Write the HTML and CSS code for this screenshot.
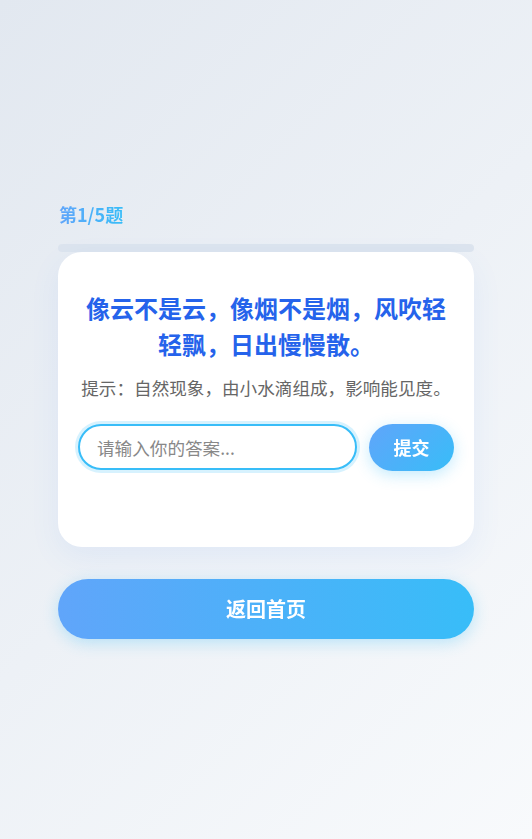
FILE: index.html
```html
<!DOCTYPE html>
<html lang="zh-CN">
<head>
<meta charset="utf-8">
<title>猜谜</title>
<link rel="stylesheet" href="styles.css">
</head>
<body>
<main class="quiz">
  <div class="quiz-label">第1/5题</div>
  <div class="progress"><div class="progress-fill"></div></div>
  <section class="card">
    <h2 class="question">像云不是云，像烟不是烟，风吹轻轻飘，日出慢慢散。</h2>
    <p class="hint">提示：自然现象，由小水滴组成，影响能见度。</p>
    <div class="answer-row">
      <input class="answer-input" type="text" placeholder="请输入你的答案..." autofocus>
      <button class="submit-btn" type="button">提交</button>
    </div>
  </section>
  <button class="home-btn" type="button">返回首页</button>
</main>
</body>
</html>
```

FILE: styles.css
```css
* { box-sizing: border-box; }
html, body { margin: 0; padding: 0; }
body {
  min-height: 100vh;
  font-family: "Noto Sans CJK SC", "Noto Sans", sans-serif;
  background: linear-gradient(135deg, #e2e8f0 0%, #f8fafc 100%);
  display: flex;
  align-items: center;
  justify-content: center;
}
.quiz {
  width: 416px;
  display: flex;
  flex-direction: column;
}
.quiz-label {
  font-size: 18px;
  line-height: 27px;
  font-weight: 700;
  background: linear-gradient(90deg, #60a5fa, #38bdf8);
  -webkit-background-clip: text;
  background-clip: text;
  color: transparent;
  align-self: flex-start;
  margin-left: 1px;
}
.progress {
  margin-top: 16px;
  height: 8px;
  border-radius: 4px;
  background: #dce4ee;
  overflow: hidden;
}
.progress-fill { width: 0; height: 100%; }
.card {
  background: #fff;
  border-radius: 24px;
  padding: 38px 20px 76px;
  box-shadow: 0 10px 30px rgba(59, 130, 246, 0.08);
}
.question {
  margin: 0;
  font-size: 24px;
  line-height: 36px;
  font-weight: 700;
  color: #2563eb;
  text-align: center;
}
.hint {
  margin: 13px 0 0;
  font-size: 17.6px;
  line-height: 26px;
  color: #666;
  text-align: center;
}
.answer-row {
  margin-top: 23px;
  display: flex;
  gap: 12px;
  align-items: center;
}
.answer-input {
  flex: 1;
  min-width: 0;
  height: 46px;
  border: 2px solid #38bdf8;
  border-radius: 23px;
  padding: 0 17px;
  font-family: inherit;
  font-size: 17.6px;
  color: #333;
  outline: none;
  box-shadow: 0 0 0 3px rgba(56, 189, 248, 0.2);
  background: #fff;
}
.answer-input::placeholder { color: #888; }
.submit-btn {
  width: 85px;
  height: 47px;
  border: none;
  border-radius: 24px;
  background: linear-gradient(135deg, #60a5fa, #38bdf8);
  color: #fff;
  font-family: inherit;
  font-size: 18px;
  font-weight: 700;
  box-shadow: 0 4px 15px rgba(56, 189, 248, 0.3);
  cursor: pointer;
}
.home-btn {
  margin-top: 32px;
  height: 60px;
  border: none;
  border-radius: 30px;
  background: linear-gradient(90deg, #60a5fa, #38bdf8);
  color: #fff;
  font-family: inherit;
  font-size: 20px;
  font-weight: 700;
  box-shadow: 0 4px 15px rgba(56, 189, 248, 0.3);
  cursor: pointer;
}
```
